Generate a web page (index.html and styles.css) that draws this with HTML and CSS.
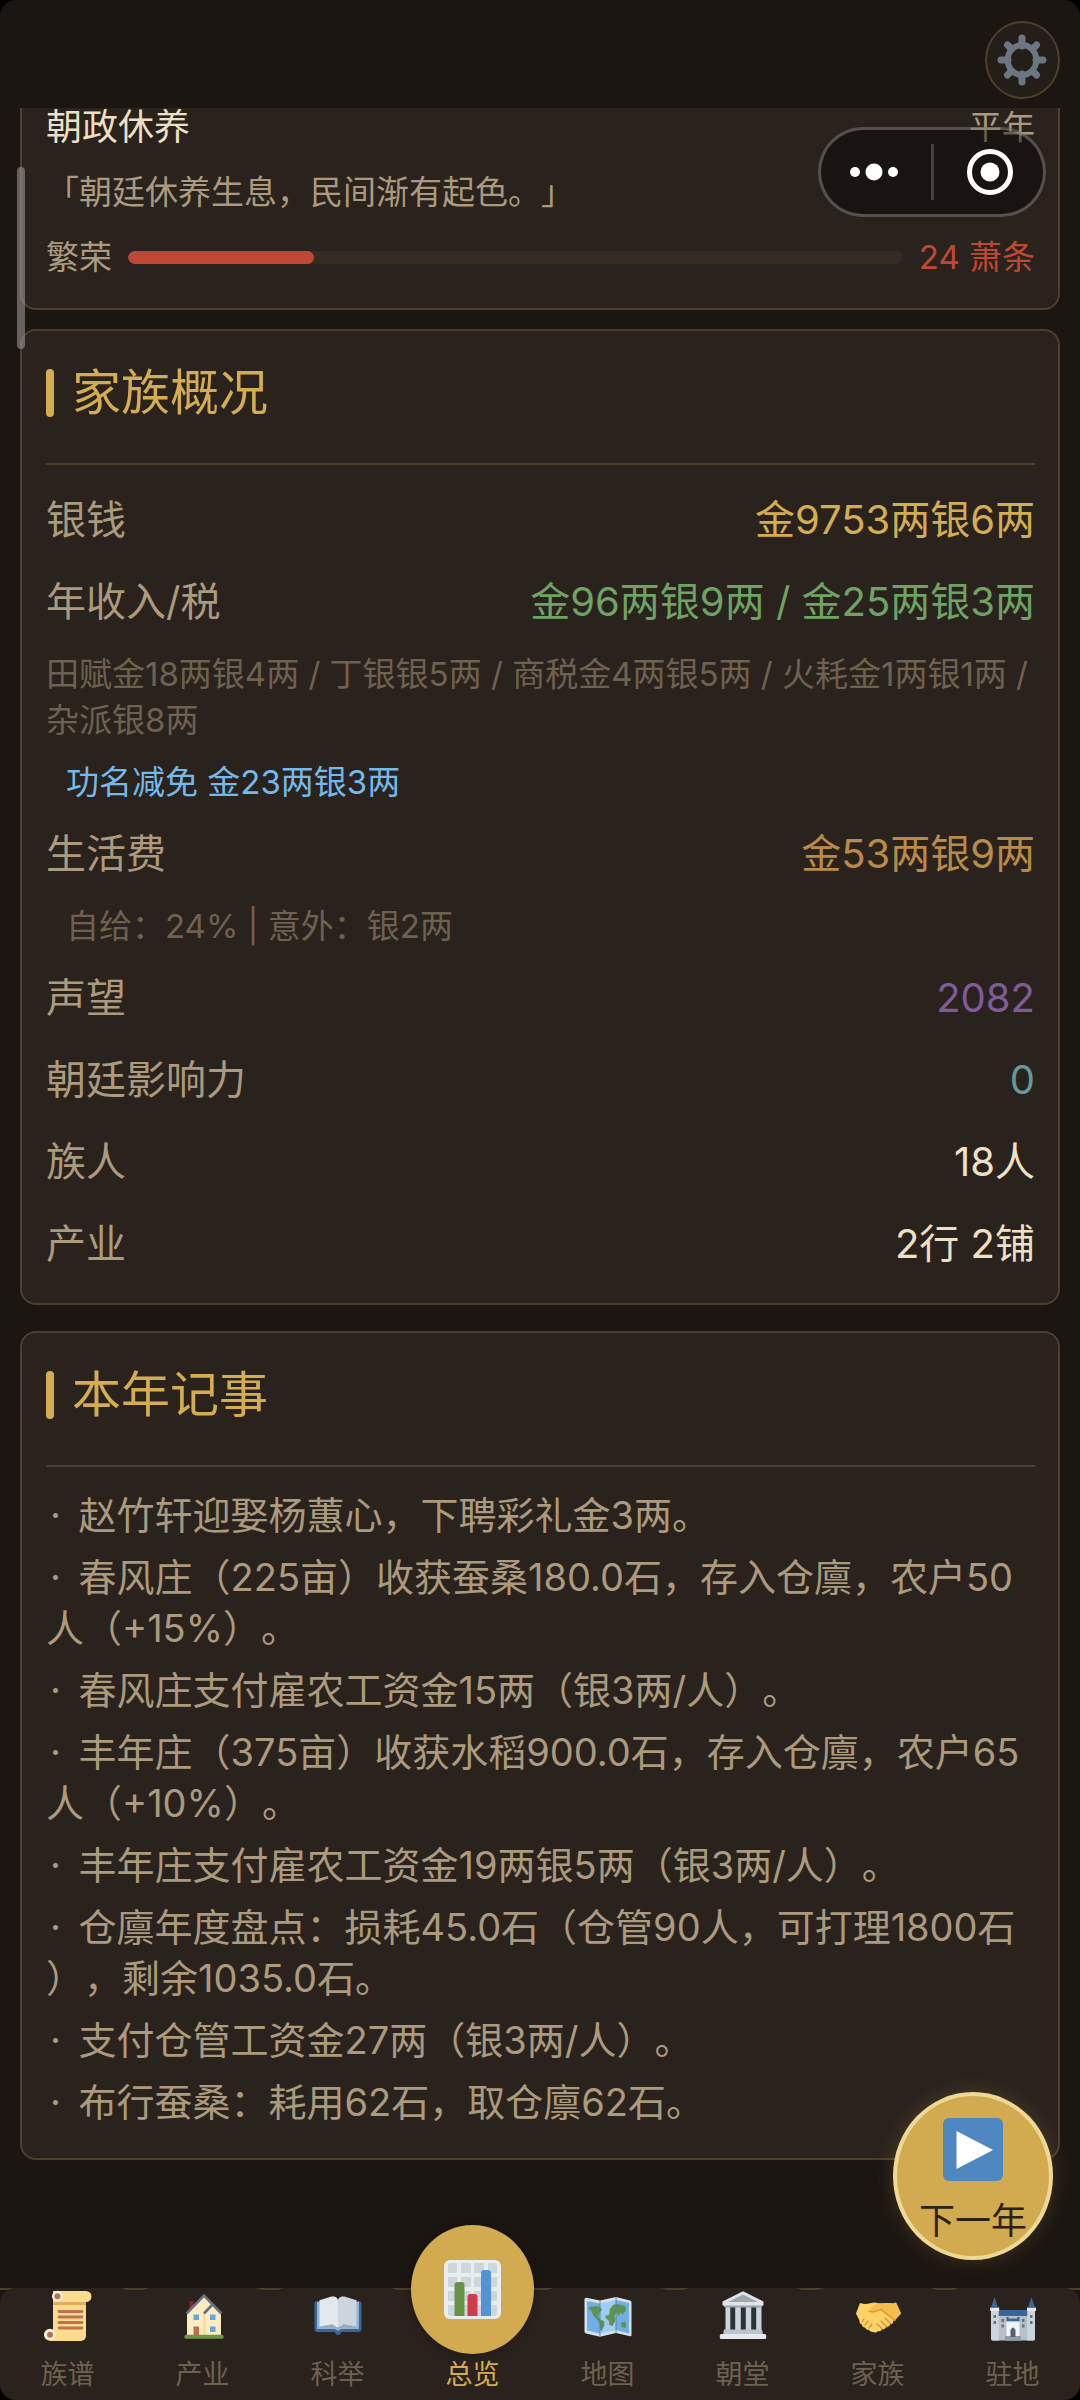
FILE: index.html
```html
<!DOCTYPE html>
<html lang="zh-CN">
<head>
    <meta charset="UTF-8">
    <meta name="viewport" content="width=device-width, initial-scale=1.0">
    <title>总览</title>
    <link rel="stylesheet" href="styles.css">
</head>
<body>

<div class="app">
    <header class="topbar">
        <button class="settings" type="button" aria-label="设置">
            <svg viewBox="0 0 52 54" width="52" height="54">
                <g stroke="#6c7682" stroke-width="7" stroke-linecap="round">
                    <path d="M25 5v8M25 41v8M4 27h7M39 27h7M10.500 12l4 4M35.500 38l4 4M10.500 42l4-4M35.500 16l4-4"/>
                </g>
                <ellipse cx="25" cy="27" rx="14.300" ry="15" fill="none" stroke="#6c7682" stroke-width="6"/>
            </svg>
        </button>
    </header>

    <div class="capsule">
        <button type="button" aria-label="更多">
            <svg viewBox="0 0 48 18" width="48" height="18" fill="#fff">
                <circle cx="5" cy="9" r="5"/>
                <circle cx="24" cy="9" r="8.500"/>
                <circle cx="43" cy="9" r="5"/>
            </svg>
        </button>
        <span class="capsule-line"></span>
        <button type="button" aria-label="关闭">
            <svg viewBox="0 0 48 48" width="48" height="48">
                <circle cx="24" cy="24" r="20.500" fill="none" stroke="#fff" stroke-width="5"/>
                <circle cx="24" cy="24" r="9.500" fill="#fff"/>
            </svg>
        </button>
    </div>
    <div class="scroll-thumb"></div>

    <main class="content">
        <section class="card court">
            <div class="court-head">
                <span class="court-name">朝政休养</span>
                <span>平年</span>
            </div>
            <p class="court-quote">「朝廷休养生息，民间渐有起色。」</p>
            <div class="prosperity">
                <span id="prosperity">繁荣</span>
                <div class="bar" role="progressbar" aria-labelledby="prosperity" aria-valuenow="24" aria-valuemin="0" aria-valuemax="100">
                    <div class="bar-fill" style="width: 24%"></div>
                </div>
                <span class="red">24 萧条</span>
            </div>
        </section>

        <section class="card">
            <h2 class="card-title">家族概况</h2>
            <div class="row"><span>银钱</span><span class="gold">金9753两银6两</span></div>
            <div class="row"><span>年收入/税</span><span class="green">金96两银9两 / 金25两银3两</span></div>
            <p class="note">田赋金18两银4两 / 丁银银5两 / 商税金4两银5两 / 火耗金1两银1两 / 杂派银8两</p>
            <p class="note note-sub blue">功名减免 金23两银3两</p>
            <div class="row"><span>生活费</span><span class="orange">金53两银9两</span></div>
            <p class="note note-sub">自给：24% | 意外：银2两</p>
            <div class="row"><span>声望</span><span class="purple">2082</span></div>
            <div class="row"><span>朝廷影响力</span><span class="teal">0</span></div>
            <div class="row"><span>族人</span><span class="light">18人</span></div>
            <div class="row"><span>产业</span><span class="light">2行 2铺</span></div>
        </section>

        <section class="card">
            <h2 class="card-title">本年记事</h2>
            <ul class="events">
                <li>·&thinsp; 赵竹轩迎娶杨蕙心，下聘彩礼金3两。</li>
                <li>·&thinsp; 春风庄（225亩）收获蚕桑180.0石，存入仓廪，农户50人（+15%）。</li>
                <li>·&thinsp; 春风庄支付雇农工资金15两（银3两/人）。</li>
                <li>·&thinsp; 丰年庄（375亩）收获水稻900.0石，存入仓廪，农户65人（+10%）。</li>
                <li>·&thinsp; 丰年庄支付雇农工资金19两银5两（银3两/人）。</li>
                <li>·&thinsp; 仓廪年度盘点：损耗45.0石（仓管90人，可打理1800石），剩余1035.0石。</li>
                <li>·&thinsp; 支付仓管工资金27两（银3两/人）。</li>
                <li>·&thinsp; 布行蚕桑：耗用62石，取仓廪62石。</li>
            </ul>
        </section>
    </main>

    <button class="next-year" type="button">
        <svg viewBox="0 0 60 63" width="60" height="63">
            <rect width="60" height="63" rx="6" fill="#4f87c0"/>
            <path d="M13.500 13v38L50 32z" fill="#fff"/>
        </svg>
        <span>下一年</span>
    </button>

    <nav class="tabbar">
        <div class="tabs">
            <a class="tab" href="#clan">
                <svg class="tab-icon" viewBox="0 0 48 52">
                    <path d="M9 1h33a5.500 5.500 0 0 1 0 11v34a5 5 0 0 1-5 5H6V45h3z" fill="#fbdb8e"/>
                    <path d="M9 12h33v3H9z" fill="#e0ad5c"/>
                    <circle cx="13.500" cy="6.300" r="5.500" fill="#fdeed0"/>
                    <circle cx="6" cy="44.700" r="6" fill="#fdeed0"/>
                    <circle cx="13.500" cy="6.300" r="3" fill="#b5705a"/>
                    <circle cx="6" cy="44.700" r="3" fill="#b5705a"/>
                    <path d="M15 21.500h23M15 27h23M15 32.500h23M15 38h23" stroke="#bd7250" stroke-width="2.800" stroke-linecap="round"/>
                </svg>
                <span>族谱</span>
            </a>
            <a class="tab" href="#estate">
                <svg class="tab-icon" viewBox="0 0 48 52">
                    <path d="M10.500 11h4v10h-4z" fill="#8c1f2b"/>
                    <path d="M8 23L25 5l17 18v22H8z" fill="#fdecc2"/>
                    <path d="M25 23l1 22h-1z" stroke="#f5dc95" stroke-width="1.500"/>
                    <path d="M7.500 23.500L25 5.500l17.500 18M25 23.500l8-8.500" fill="none" stroke="#66717c" stroke-width="2.600"/>
                    <path d="M14.500 24.500H20V30h-5.500zM31 24.500h5.500V30H31zM31 36.500h5.500V42H31z" fill="#62a7e0"/>
                    <path d="M14.500 36.500H20V45h-5.500z" fill="#b96f50"/>
                    <rect x="5.500" y="44.700" width="39" height="4" rx="1.500" fill="#6d9548"/>
                </svg>
                <span>产业</span>
            </a>
            <a class="tab" href="#exam">
                <svg class="tab-icon" viewBox="0 0 48 52">
                    <path d="M3.500 11h41a3 3 0 0 1 3 3v25a3 3 0 0 1-3 3H27a3 3 0 0 1-6 0H3.500a3 3 0 0 1-3-3V14a3 3 0 0 1 3-3z" fill="#3b6697"/>
                    <path d="M3 12h42v27H27l-3 2-3-2H3z" fill="#8fb2d6"/>
                    <path d="M24 39c-5-3-12-3-18.500-1l3-3h31l3 3c-6.500-2-13.500-2-18.500 1z" fill="#9aa5b0"/>
                    <path d="M5.500 10c6-1 10-4 14.500-3.500 2.500.5 4 2 4 4V38c-5-4-12-3-18.500-1z" fill="#e3e8ed"/>
                    <path d="M42.500 10c-6-1-10-4-14.500-3.500-2.500.5-4 2-4 4V38c5-4 12-3 18.500-1z" fill="#ccd5dd"/>
                    <path d="M6 37c5-2 9-1 12-3l6 4 6-4c3 2 7 1 12 3-7-1-13-1-18 2-5-3-11-3-18-2z" fill="#9daab5"/>
                </svg>
                <span>科举</span>
            </a>
            <a class="tab active" href="#overview" aria-current="page">
                <span class="tab-circle">
                    <svg viewBox="0 0 57 59" width="57" height="59">
                        <rect width="57" height="59" rx="6" fill="#e8edef"/>
                        <path d="M4 6q0-3 3-3h6v10H4zM17 3h10v10H17zM30 3h10v10H30zM44 3h6q3 0 3 3v7h-9zM4 17h9v10H4zM17 17h10v10H17zM30 17h10v10H30zM44 17h9v10h-9zM4 31h9v10H4zM17 31h10v10H17zM30 31h10v10H30zM44 31h9v10h-9zM4 45h9v11H7q-3 0-3-3zM17 45h10v11H17zM30 45h10v11H30zM44 45h9v8q0 3-3 3h-6z" fill="#cdd5dd"/>
                        <path d="M10.500 56V25q0-3 3-3h4q3 0 3 3v31z" fill="#689247"/>
                        <path d="M23.500 56V37q0-3 3-3h4q3 0 3 3v19z" fill="#cf3b4b"/>
                        <path d="M37 56V13q0-3 3-3h4q3 0 3 3v43z" fill="#5493d3"/>
                    </svg>
                </span>
                <span>总览</span>
            </a>
            <a class="tab" href="#map">
                <svg class="tab-icon" viewBox="0 0 48 52">
                    <path d="M.5 9q.5-1.500 2-1.300L16 10.500l16-3.500 14 3.500q1.500.5 1.500 2V45q0 1.500-1.500 1.300L32 43l-16 3.800L2 43.500Q.5 43 .5 41.500z" fill="#d6e0ea"/>
                    <path d="M3 11l13 2.500v30L3 40.500z" fill="#70aee8"/>
                    <path d="M16 13.500L32 10v30l-16 3.500z" fill="#9dcbf6"/>
                    <path d="M32 10l13 3v30.500L32 40z" fill="#70aee8"/>
                    <path d="M5 17l7-1 4 1 2 3-3 3-1 4 3 3 3 1 .5 4-3 6-1.500-1-.500-6-2-4-4-4-2-5-3-2zM21 26l4-1 1-6 3-4 4-1 8 2 1.500 3-3 5-3-1-2 3-2-4-2 4 1 4-3 6-3-1-1-5-2-1zM37 33l4-2 1.500 4-1 3-4-1z" fill="#5d9450"/>
                    <path d="M16 10.500v36M32 7v36" stroke="#55789c" stroke-width=".8"/>
                </svg>
                <span>地图</span>
            </a>
            <a class="tab" href="#court">
                <svg class="tab-icon" viewBox="0 0 48 52">
                    <path d="M8 16h32v24H8z" fill="#2d3237"/>
                    <path d="M6.500 16h4.800v24H6.500zM16.200 16h5.600v24h-5.600zM26.800 16h5.400v24h-5.400zM37.200 16h5.300v24h-5.300z" fill="#ccd4dc"/>
                    <path d="M3.500 11.500L24 1.300l20.500 10.200V15l-2.500 2H6l-2.500-2z" fill="#dfe4e9"/>
                    <path d="M9 12L24 4.500 39 12z" fill="#9ba8b4"/>
                    <path d="M5 15.500h38L42 17.500H6z" fill="#99a5b1"/>
                    <path d="M5 39.500h38l1 5H4z" fill="#bac4ce"/>
                    <rect x=".8" y="44" width="46.400" height="5" rx="1.500" fill="#e5e9ed"/>
                </svg>
                <span>朝堂</span>
            </a>
            <a class="tab" href="#family">
                <svg class="tab-icon" viewBox="0 0 48 52">
                    <path d="M6 13q5 1.500 9 .5l5-1 6 1 9-.5q4 1 7-.5l5 11-6 6.500-2 1q1 3-3 3 0 3-4 3-1 3-4 2-1 3-4 2-2 2.500-4.500 1-3 .5-4.500-2-3 0-4-2.500-3-.5-3-3-3-.5-2.500-4L2 23.500z" fill="#fdd367"/>
                    <path d="M24 13.500l11-.5q4 1 7-.5l5 11-6 6.500-14-10-6 2q-5 1-6-.5 3-6 9-8z" fill="#f6bd4d"/>
                    <path d="M15 21q2 1.500 6 .5l6-2 14 11M31 28l6 6M27 31l6 6M23 34l5.500 5M10 29l-2 3M14 31l-3 4M18 34l-3 4" fill="none" stroke="#d79136" stroke-width="1.300" stroke-linecap="round"/>
                </svg>
                <span>家族</span>
            </a>
            <a class="tab" href="#base">
                <svg class="tab-icon" viewBox="0 0 48 52">
                    <path d="M10 20h28v7H10z" fill="#3a6596"/>
                    <path d="M9 26h30v24.500H9z" fill="#b7c0ca"/>
                    <path d="M2 20h7.800v30.700H4q-2 0-2-2zM38.200 20H46v28.700q0 2-2 2h-5.800z" fill="#ccd4dc"/>
                    <path d="M1.200 17.500h9V21h-9zM38 17.500h9V21h-9z" fill="#e6eaee"/>
                    <path d="M5.500 7L9 17.500H2zM42.500 7L46 17.500h-7z" fill="#3a6596"/>
                    <path d="M17.500 27h2v1.500h9V27h2v4.500h-13z" fill="#3a6596"/>
                    <path d="M17.500 31.500h13V47h-13z" fill="#f1f4f6"/>
                    <path d="M16 46h16v4.700H16z" fill="#8f9ca9"/>
                    <path d="M21.500 47v-7q2.500-5 5 0v7z" fill="#56616c"/>
                    <path d="M4.500 25H7v3H4.500zM4.500 31H7v3H4.500zM41 25h2.500v3H41zM41 31h2.500v3H41zM12.500 29H15v3h-2.500zM12.500 34.500H15v3h-2.500zM33 29h2.500v3H33zM33 34.500h2.500v3H33z" fill="#66727e"/>
                </svg>
                <span>驻地</span>
            </a>
        </div>
    </nav>
</div>

</body>
</html>
```
FILE: styles.css
```css
* {
    box-sizing: border-box;
}
html {
    background: #000;
}
body {
    margin: 0;
    font-family: Inter, "Noto Sans CJK SC", sans-serif;
    color: #ab9a7e;
    text-spacing-trim: space-all;
}
h2, p, ul {
    margin: 0;
    padding: 0;
    font-weight: 400;
}
button {
    padding: 0;
    border: none;
    background: none;
    font: inherit;
    cursor: pointer;
}
svg {
    display: block;
}
.app {
    position: relative;
    display: flex;
    flex-direction: column;
    min-height: 100vh;
    background: #1c1612;
    border-radius: 16px;
    overflow: hidden;
}

/* top bar */
.topbar {
    display: flex;
    justify-content: flex-end;
    height: 108px;
    padding: 21px 20px 9px;
}
.settings {
    display: flex;
    align-items: center;
    justify-content: center;
    width: 75px;
    height: 78px;
    border: 2px solid #4e3f2d;
    border-radius: 50%;
    background: #241e18;
}
.capsule {
    position: absolute;
    top: 127px;
    right: 34px;
    display: flex;
    align-items: center;
    width: 228px;
    height: 90px;
    border: 3px solid rgba(255, 255, 255, 0.25);
    border-radius: 45px;
    background: rgba(0, 0, 0, 0.4);
}
.capsule button {
    flex: 1;
    display: flex;
    justify-content: center;
}
.capsule button:first-child {
    padding-right: 4px;
}
.capsule button:last-child {
    padding-left: 4px;
}
.capsule-line {
    width: 3px;
    height: 56px;
    background: #474340;
}
.scroll-thumb {
    position: absolute;
    top: 167px;
    left: 17px;
    width: 8px;
    height: 182px;
    border-radius: 4px;
    background: rgba(160, 160, 160, 0.55);
}

/* cards */
.content {
    flex: 1;
    padding: 0 20px;
}
.card {
    margin-bottom: 26px;
    padding: 26px 23px 18px 24px;
    border: 2px solid #4e3f2d;
    border-radius: 16px;
    background: #2a221d;
}
.card-title {
    display: flex;
    align-items: center;
    gap: 18px;
    margin-bottom: 14px;
    padding-bottom: 34px;
    border-bottom: 2px solid #4e3f2d;
    font-size: 49px;
    line-height: 72px;
    color: #d4ad52;
}
.card-title::before {
    content: "";
    width: 8px;
    height: 48px;
    border-radius: 4px;
    background: #d4ad52;
}

/* court */
.court {
    margin-bottom: 19px;
    padding: 0 23px 28px 24px;
    border-top: none;
    border-radius: 0 0 16px 16px;
    font-size: 33px;
    line-height: 46px;
}
.court-head {
    display: flex;
    justify-content: space-between;
    line-height: 38px;
}
.court-name {
    font-size: 36px;
    color: #eee0c6;
}
.court-quote {
    margin: 23px 0 19px;
}
.prosperity {
    display: flex;
    align-items: center;
    gap: 16px;
}
.bar {
    flex: 1;
    height: 13px;
    border-radius: 7px;
    background: #352b22;
    overflow: hidden;
}
.bar-fill {
    height: 100%;
    border-radius: 7px;
    background: #be4834;
}

/* family overview */
.row {
    display: flex;
    justify-content: space-between;
    padding: 14px 0;
    font-size: 40px;
    line-height: 54px;
}
.note {
    margin: 8px 0;
    font-size: 33px;
    line-height: 46px;
    color: #6f614f;
}
.note + .note {
    margin-top: 16px;
}
.note-sub {
    padding-left: 20px;
}
.gold { color: #d4ad52; }
.green { color: #6ea364; }
.blue { color: #74b9ea; }
.orange { color: #b98a48; }
.purple { color: #7f5b9c; }
.teal { color: #659a98; }
.light { color: #eee0c6; }
.red { color: #be4834; }

/* events */
.events {
    padding: 3px 0 7px;
    list-style: none;
    font-size: 38px;
    line-height: 51px;
    line-break: anywhere;
    text-indent: 4px;
}
.events li {
    padding: 6px 0 5px;
}

/* floating button */
.next-year {
    position: absolute;
    right: 27px;
    bottom: 140px;
    display: flex;
    flex-direction: column;
    align-items: center;
    gap: 16px;
    width: 160px;
    height: 168px;
    padding-top: 22px;
    border: 4px solid #efd895;
    border-radius: 50%;
    background: #d2ab50;
    box-shadow: 0 0 20px rgba(212, 173, 82, 0.2);
    font-size: 36px;
    line-height: 48px;
    color: #2c2214;
}

/* tab bar */
.tabbar {
    border-top: 2px solid #4e3f2d;
}
.tabs {
    display: flex;
    border-radius: 16px 16px 0 0;
    background: #2a221d;
}
.tab {
    flex: 1;
    display: flex;
    flex-direction: column;
    align-items: center;
    height: 112px;
    margin-top: -2px;
    padding-top: 2px;
    border-radius: 16px;
    background: #2a221d;
    font-size: 27px;
    line-height: 38px;
    color: #6f614f;
    text-decoration: none;
}
.tab-icon {
    width: 48px;
    height: 52px;
    margin-bottom: 14px;
}
.tab-circle {
    display: flex;
    align-items: center;
    justify-content: center;
    width: 123px;
    height: 129px;
    margin: -65px 0 2px;
    border-radius: 50%;
    background: #d2ab50;
    box-shadow: 0 0 12px rgba(0, 0, 0, 0.3);
}
.active {
    color: #d4ad52;
}
```
